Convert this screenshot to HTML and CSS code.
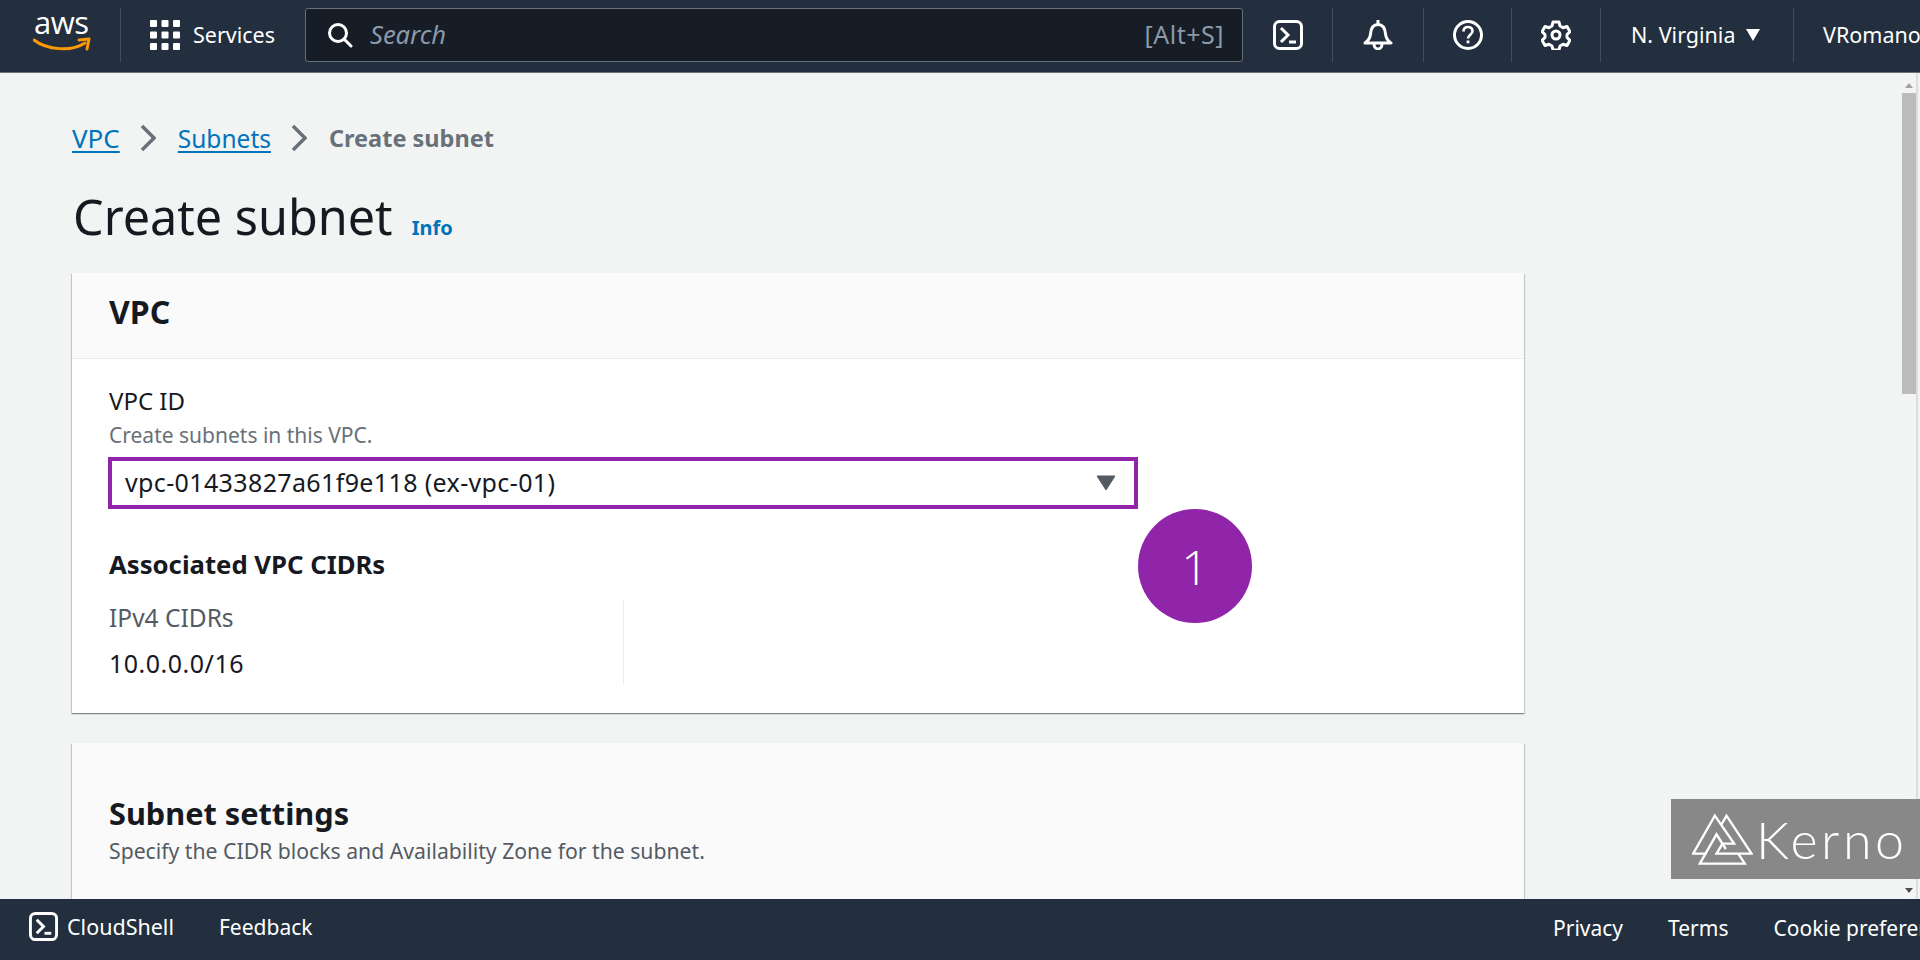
FILE: index.html
```html
<!DOCTYPE html>
<html lang="en">
<head>
<meta charset="utf-8">
<title>Create subnet</title>
<link rel="stylesheet" href="styles.css">
</head>
<body>
<header class="topbar">
  <div class="logo">
    <span class="logo-word">aws</span>
    <svg class="logo-smile" viewBox="0 0 58 16"><path d="M1 3C14 13 38 15 52 6" fill="none" stroke="#f90" stroke-width="3" stroke-linecap="round"/><path d="M46 3L56 2L54 12" fill="none" stroke="#f90" stroke-width="3" stroke-linecap="round" stroke-linejoin="round"/></svg>
  </div>
  <div class="services">
    <svg class="grid-icon" viewBox="0 0 30 30"><g fill="#fff"><rect x="0" y="0" width="7" height="7" rx="1"/><rect x="11.500" y="0" width="7" height="7" rx="1"/><rect x="23" y="0" width="7" height="7" rx="1"/><rect x="0" y="11.500" width="7" height="7" rx="1"/><rect x="11.500" y="11.500" width="7" height="7" rx="1"/><rect x="23" y="11.500" width="7" height="7" rx="1"/><rect x="0" y="23" width="7" height="7" rx="1"/><rect x="11.500" y="23" width="7" height="7" rx="1"/><rect x="23" y="23" width="7" height="7" rx="1"/></g></svg>
    <span class="bar-text">Services</span>
  </div>
  <div class="search">
    <svg class="search-icon" viewBox="0 0 26 26"><circle cx="11" cy="11" r="8.500" fill="none" stroke="#fff" stroke-width="3"/><path d="M17 17l7 7" stroke="#fff" stroke-width="3" stroke-linecap="round"/></svg>
    <span class="search-text">Search</span>
    <span class="search-key">[Alt+S]</span>
  </div>
  <div class="tool tool-shell">
    <svg class="icon" viewBox="0 0 30 30"><rect x="1.500" y="1.500" width="27" height="27" rx="5" fill="none" stroke="#fff" stroke-width="3"/><path d="M8 8l7 7-7 7" fill="none" stroke="#fff" stroke-width="3"/><path d="M16 22h7" stroke="#fff" stroke-width="3"/></svg>
  </div>
  <div class="tool tool-bell">
    <svg class="icon" viewBox="0 0 30 30"><path d="M2 23c3-2 5-4 5.500-9 .5-6 3-9.500 7.500-9.500s7 3.500 7.500 9.500c.5 5 2.500 7 5.500 9z" fill="none" stroke="#fff" stroke-width="3" stroke-linejoin="round"/><path d="M11 24c0 3 2 5 4 5s4-2 4-5" fill="none" stroke="#fff" stroke-width="3"/><path d="M15 0v4" stroke="#fff" stroke-width="3"/></svg>
  </div>
  <div class="tool tool-help">
    <svg class="icon" viewBox="0 0 30 30"><circle cx="15" cy="15" r="13.500" fill="none" stroke="#fff" stroke-width="3"/><path d="M10.500 11.500c0-3 2-4.500 4.500-4.500s4.500 1.500 4.500 4.200c0 3.300-4.500 3.800-4.500 7.300" fill="none" stroke="#fff" stroke-width="2.600"/><rect x="13.600" y="20.500" width="2.800" height="2.800" fill="#fff"/></svg>
  </div>
  <div class="tool tool-gear">
    <svg class="icon" viewBox="0 0 30 30"><path d="M12 2h6l1 4 3 1.700 4-1.200 3 5.200-3 2.800v3l3 2.800-3 5.200-4-1.200-3 1.700-1 4h-6l-1-4-3-1.700-4 1.200-3-5.200 3-2.800v-3l-3-2.800 3-5.200 4 1.200 3-1.700z" fill="none" stroke="#fff" stroke-width="3" stroke-linejoin="round"/><circle cx="15" cy="15" r="4" fill="none" stroke="#fff" stroke-width="3"/></svg>
  </div>
  <div class="region">
    <span class="bar-text">N. Virginia</span>
    <svg class="region-caret" viewBox="0 0 14 12"><path d="M0 0h14l-7 12z" fill="#fff"/></svg>
  </div>
  <div class="account"><span class="bar-text">VRomano</span></div>
</header>

<main class="content">
  <div class="page">
    <nav class="crumbs">
      <a class="crumb-link crumb-vpc">VPC</a>
      <svg class="crumb-sep" viewBox="0 0 16 28"><path d="M2 2l12 12L2 26" fill="none" stroke="#687078" stroke-width="3.500"/></svg>
      <a class="crumb-link">Subnets</a>
      <svg class="crumb-sep" viewBox="0 0 16 28"><path d="M2 2l12 12L2 26" fill="none" stroke="#687078" stroke-width="3.500"/></svg>
      <span class="crumb-current">Create subnet</span>
    </nav>
    <div class="title-row">
      <h1 class="title">Create subnet</h1>
      <a class="info">Info</a>
    </div>
    <section class="card">
      <div class="card-head"><h2 class="card-title card-title-vpc">VPC</h2></div>
      <div class="card-body">
        <div class="label">VPC ID</div>
        <div class="hint">Create subnets in this VPC.</div>
        <div class="select">
          <span class="select-value">vpc-01433827a61f9e118 (ex-vpc-01)</span>
          <svg class="select-caret" viewBox="0 0 20 16"><path d="M1 1h18l-9 14z" fill="#545b64" stroke="#545b64" stroke-linejoin="round"/></svg>
        </div>
        <h3 class="sub-title">Associated VPC CIDRs</h3>
        <div class="cidr">
          <div class="cidr-key">IPv4 CIDRs</div>
          <div class="cidr-value">10.0.0.0/16</div>
        </div>
      </div>
    </section>
    <section class="card card-second">
      <h2 class="card-title">Subnet settings</h2>
      <p class="card-desc">Specify the CIDR blocks and Availability Zone for the subnet.</p>
    </section>
  </div>
  <div class="step">1</div>
  <div class="scrollbar">
    <span class="arrow-up"></span>
    <span class="thumb"></span>
    <span class="arrow-down"></span>
  </div>
  <div class="watermark">
    <svg class="wm-logo" viewBox="32 38 182 156"><g fill="none" stroke="#fff" stroke-width="7"><path d="M75 160H35L100 46L158 130H118"/><path d="M119 74L135 46L210 160H105L125 127"/><path d="M170 160L190 190H55L105 102L133 146"/></g></svg>
    <span class="wm-text">Kerno</span>
  </div>
</main>

<footer class="bottombar">
  <div class="shell">
    <svg class="shell-icon" viewBox="0 0 30 30"><rect x="1.500" y="1.500" width="27" height="27" rx="5" fill="none" stroke="#fff" stroke-width="3"/><path d="M8 8l7 7-7 7" fill="none" stroke="#fff" stroke-width="3"/><path d="M16 22h7" stroke="#fff" stroke-width="3"/></svg>
    <span class="shell-text">CloudShell</span>
  </div>
  <span class="feedback">Feedback</span>
  <div class="legal">
    <span>Privacy</span>
    <span>Terms</span>
    <span>Cookie preferences</span>
  </div>
</footer>
</body>
</html>
```
FILE: styles.css
```css
* { box-sizing: border-box; }
html, body { margin: 0; height: 960px; overflow: hidden; }
body {
  width: 1920px;
  display: flex;
  flex-direction: column;
  font-family: "Noto Sans", "Open Sans", sans-serif;
  color: #16191f;
  background: #f2f3f3;
}
h1, h2, h3, p { margin: 0; }

.topbar {
  height: 73px;
  flex: none;
  display: flex;
  align-items: center;
  padding-bottom: 2px;
  background: #232f3e;
  border-bottom: 1px solid #687078;
  color: #fff;
  overflow: hidden;
  white-space: nowrap;
}
.bar-text { font-size: 21.500px; margin-bottom: 2px; }
.logo {
  width: 121px;
  height: 54px;
  padding-left: 33px;
  border-right: 1px solid #414d5c;
  display: flex;
  flex-direction: column;
  flex: none;
}
.logo-word {
  font-family: "Open Sans", sans-serif;
  font-size: 31px;
  line-height: 30px;
  letter-spacing: -0.500px;
  padding-left: 1px;
  margin-top: -1px;
}
.logo-smile { width: 58px; height: 16px; }
.services {
  display: flex;
  align-items: center;
  flex: none;
  width: 184px;
  padding-left: 29px;
  gap: 13px;
}
.grid-icon { width: 30px; height: 30px; }
.search {
  width: 938px;
  height: 54px;
  flex: none;
  display: flex;
  align-items: center;
  padding: 0 18px 0 21px;
  background: #161d26;
  border: 1px solid #687078;
  border-radius: 3px;
}
.search-icon { width: 26px; height: 26px; }
.search-text { margin: 0 0 2px 17px; font-size: 25.500px; font-style: italic; color: #8d99a8; }
.search-key { margin: 0 0 2px auto; font-size: 25px; letter-spacing: .5px; color: #8d99a8; }
.tool {
  height: 54px;
  display: flex;
  align-items: center;
  justify-content: center;
  flex: none;
  border-right: 1px solid #414d5c;
}
.tool-shell { width: 90px; }
.tool-bell { width: 91px; }
.tool-help { width: 88px; }
.tool-gear { width: 89px; }
.icon { width: 30px; height: 30px; }
.region {
  width: 193px;
  height: 54px;
  flex: none;
  display: flex;
  align-items: center;
  padding-left: 30px;
  gap: 11px;
  border-right: 1px solid #414d5c;
}
.region-caret { width: 14px; height: 12px; }
.account { padding-left: 29px; display: flex; }

.content {
  flex: 1;
  min-height: 0;
  position: relative;
  overflow: hidden;
}
.page { width: 1524px; padding: 44px 0 0 72px; }
.crumbs { display: flex; align-items: center; height: 42px; font-size: 24.500px; }
.crumb-link { color: #0073bb; text-decoration: underline; text-underline-offset: 3px; }
.crumb-vpc { font-size: 26px; }
.crumb-sep { width: 16px; height: 28px; margin: 0 22px 0 20px; }
.crumb-current { color: #687078; font-weight: 700; font-size: 23.500px; }
.title-row { display: flex; align-items: baseline; margin: 21px 0; height: 72px; }
.title { font-size: 48.500px; font-weight: 400; line-height: 72px; padding-left: 1px; }
.info { margin-left: 19px; font-size: 20px; font-weight: 700; color: #0073bb; }
.card {
  background: #fff;
  box-shadow: 0 1px 1px 0 rgba(0,28,36,.3), 1px 1px 1px 0 rgba(0,28,36,.15), -1px 1px 1px 0 rgba(0,28,36,.15);
}
.card-head {
  height: 86px;
  padding: 0 37px 8px;
  display: flex;
  align-items: center;
  background: #fafafa;
  border-bottom: 1px solid #eaeded;
}
.card-title { font-size: 30.700px; font-weight: 700; line-height: 40px; }
.card-title-vpc { font-size: 32px; }
.card-body { height: 354px; padding: 25px 29px 0 36px; }
.label { font-size: 24px; line-height: 34px; padding-left: 1px; }
.hint { font-size: 21px; line-height: 30px; margin-top: 2px; padding-left: 1px; color: #687078; }
.select {
  width: 1030px;
  height: 52px;
  margin-top: 7px;
  padding: 0 18px 0 13px;
  display: flex;
  align-items: center;
  justify-content: space-between;
  border: 4px solid #9025a9;
  font-size: 25px;
  letter-spacing: .37px;
  background: #fff;
}
.select-value { margin-bottom: 2px; }
.select-caret { width: 20px; height: 16px; }
.sub-title { margin-top: 39px; padding-left: 1px; font-size: 25.700px; line-height: 34px; font-weight: 700; }
.cidr { width: 516px; height: 84px; margin-top: 18px; padding: 1px 0 0 1px; border-right: 1px solid #eaeded; }
.cidr-key { font-size: 24.500px; line-height: 34px; color: #545b64; }
.cidr-value { font-size: 25px; letter-spacing: .5px; line-height: 34px; margin-top: 11px; }
.card-second {
  margin-top: 30px;
  height: 240px;
  padding: 50px 37px 0;
  background: #fafafa;
}
.card-desc { font-size: 21.200px; line-height: 28px; margin-top: 4px; color: #545b64; }

.step {
  position: absolute;
  left: 1138px;
  top: 436px;
  width: 114px;
  height: 114px;
  border-radius: 50%;
  background: #9025a9;
  color: #fff;
  font-family: "Open Sans", sans-serif;
  font-size: 48px;
  font-weight: 300;
  display: flex;
  align-items: center;
  justify-content: center;
}
.scrollbar {
  position: absolute;
  left: 1902px;
  top: 0;
  bottom: 0;
  width: 16px;
  border-right: 2px solid #dcdede;
  background: #f3f4f4;
  display: flex;
  flex-direction: column;
  align-items: center;
}
.arrow-up {
  margin-top: 10px;
  border: 4px solid transparent;
  border-top: 0;
  border-bottom: 5px solid #a3a3a3;
}
.thumb { width: 100%; height: 301px; margin-top: 5px; background: #bcbcbc; }
.arrow-down {
  margin-top: auto;
  margin-bottom: 6px;
  border: 4px solid transparent;
  border-bottom: 0;
  border-top: 5px solid #505050;
}
.watermark {
  position: absolute;
  left: 1671px;
  top: 726px;
  width: 249px;
  height: 80px;
  padding-left: 21px;
  display: flex;
  align-items: center;
  gap: 3px;
  background: #878887;
  color: #fff;
}
.wm-logo { width: 61px; height: 52px; }
.wm-text { font-family: "Lato", sans-serif; font-size: 52px; font-weight: 300; letter-spacing: 3.500px; }

.bottombar {
  height: 61px;
  flex: none;
  display: flex;
  align-items: center;
  background: #232f3e;
  color: #fff;
  font-size: 21px;
  white-space: nowrap;
  overflow: hidden;
}
.shell { display: flex; align-items: center; gap: 9px; padding-left: 29px; margin-bottom: 6px; }
.shell-icon { width: 29px; height: 29px; }
.shell-text { font-size: 21.500px; }
.feedback { margin: 0 0 5px 45px; }
.legal { margin: 0 0 4px auto; display: flex; gap: 45px; width: 367px; flex: none; }
```
